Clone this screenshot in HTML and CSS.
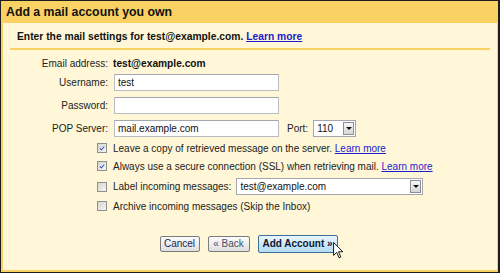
FILE: index.html
```html
<!DOCTYPE html>
<html>
<head>
<meta charset="utf-8">
<link rel="stylesheet" href="styles.css">
</head>
<body>
<div class="frame">
  <div class="header">Add a mail account you own</div>
  <div class="body">
    <div class="intro">Enter the mail settings for test@example.com. <a href="#">Learn more</a></div>
    <div class="form">
      <span class="label r-email">Email address:</span><b class="email r-email">test@example.com</b>
      <label class="label">Username:</label><input class="text" type="text" value="test">
      <label class="label">Password:</label><input class="text" type="password" value="">
      <label class="label">POP Server:</label>
      <div class="pop">
        <input class="text" type="text" value="mail.example.com">
        <span class="port">Port:</span>
        <div class="select port-sel"><span class="val">110</span><span class="arrow"></span></div>
      </div>
    </div>
    <div class="checks">
      <div class="check c1"><span class="box on"><svg viewBox="0 0 10 10"><path d="M2.3 4.6 L4.2 6.6 L7.8 2.6 L7.8 4.2 L4.2 8.2 L2.3 6.2 Z" fill="#2a3fb0"/></svg></span><span>Leave a copy of retrieved message on the server. <a href="#">Learn more</a></span></div>
      <div class="check c2"><span class="box on"><svg viewBox="0 0 10 10"><path d="M2.3 4.6 L4.2 6.6 L7.8 2.6 L7.8 4.2 L4.2 8.2 L2.3 6.2 Z" fill="#2a3fb0"/></svg></span><span>Always use a secure connection (SSL) when retrieving mail. <a href="#">Learn more</a></span></div>
      <div class="check c3"><span class="box"></span><span>Label incoming messages:</span><div class="select label-sel"><span class="val">test@example.com</span><span class="arrow"></span></div></div>
      <div class="check c4"><span class="box"></span><span>Archive incoming messages (Skip the Inbox)</span></div>
    </div>
    <div class="buttons">
      <button class="btn">Cancel</button>
      <button class="btn">« Back</button>
      <button class="btn primary">Add Account »</button>
    </div>
  </div>
  <svg class="cursor" viewBox="0 0 12 19" width="11" height="17"><path d="M0.5 0.5 L0.5 15 L4 11.6 L6.6 17.6 L8.6 16.8 L6 10.9 L10.8 10.9 Z" fill="#fff" stroke="#000" stroke-width="1" stroke-linejoin="miter"/></svg>
</div>
</body>
</html>
```

FILE: styles.css
```css
* { box-sizing: border-box; }
html, body { margin: 0; padding: 0; }
body {
  width: 500px;
  height: 273px;
  font-family: "Liberation Sans", Arial, sans-serif;
  font-size: 10px;
  color: #222;
  overflow: hidden;
}
.frame {
  position: relative;
  width: 500px;
  height: 273px;
  border: 1px solid #1d1d1d;
  border-right-width: 2px;
  border-bottom-width: 1px;
  background: #fad163;
  display: flex;
  flex-direction: column;
}
.header {
  height: 22px;
  line-height: 22px;
  padding-left: 5px;
  font-size: 12.3px;
  font-weight: bold;
  color: #111;
  flex: none;
}
.body {
  flex: 1;
  margin: 0 1px 2px 2px;
  background: #fff7d7;
}
.intro {
  margin: 0 7px 0 7px;
  padding: 7px 0 5px 7px;
  line-height: 13px;
  font-size: 10.3px;
  font-weight: bold;
  color: #111;
  border-bottom: 2px solid #fad163;
}
a { color: #1c1ccc; text-decoration: underline; }
.form {
  display: grid;
  grid-template-columns: 105px auto;
  grid-template-rows: 18px 17px 23px 23px;
  column-gap: 5px;
  align-items: end;
  margin-top: 6px;
}
.label {
  text-align: right;
  color: #222;
  line-height: 17px;
}
.r-email { line-height: 16px; align-self: start; }
.email { font-weight: bold; color: #111; font-size: 10.2px; }
.text {
  width: 165px;
  height: 17px;
  margin: 0 0 0 1px;
  padding: 0 3px;
  border: 1px solid #b9bcc3;
  border-top-color: #a4a7ae;
  border-radius: 1px;
  background: #fff;
  font-family: inherit;
  font-size: 10px;
  color: #111;
  outline: none;
}
.pop {
  display: flex;
  align-items: center;
}
.port { margin-left: 8px; margin-right: 5px; }
.select {
  height: 17px;
  display: flex;
  align-items: center;
  justify-content: space-between;
  border: 1px solid #a2a6ad;
  background: #fff;
  padding: 1px 1px 1px 3px;
  color: #111;
}
.port-sel { width: 43px; }
.label-sel { width: 187px; margin-left: 5px; }
.arrow {
  width: 11px;
  height: 13px;
  border: 1px solid #8c8f96;
  background: linear-gradient(#f7f7f7, #d6d6d6);
  position: relative;
}
.arrow::after {
  content: "";
  position: absolute;
  left: 2px;
  top: 4px;
  border-left: 3px solid transparent;
  border-right: 3px solid transparent;
  border-top: 3px solid #111;
}
.checks {
  padding-left: 94px;
  margin-top: 3px;
}
.check {
  display: flex;
  align-items: center;
  height: 16px;
  white-space: nowrap;
}
.c2 { margin-top: 2px; }
.c3 { margin-top: 4px; height: 17px; }
.c4 { margin-top: 3px; }
.box {
  width: 10px;
  height: 10px;
  border: 1px solid #8e8f8f;
  background: linear-gradient(135deg, #d5d5d2, #f4f4f2);
  margin-right: 6px;
  flex: none;
  display: flex;
}
.box svg { width: 8px; height: 8px; }
.buttons {
  display: flex;
  justify-content: center;
  align-items: center;
  gap: 8px;
  margin-top: 21px;
  padding-right: 3px;
}
.btn {
  height: 16px;
  padding: 0;
  white-space: nowrap;
  font-family: inherit;
  font-size: 10px;
  color: #1b2350;
  border: 1px solid #7b7b7b;
  border-radius: 2px;
  background: linear-gradient(#fcfcfc, #dedede);
  line-height: 14px;
}
.btn:nth-child(1) { width: 40px; }
.btn:nth-child(2) { width: 42px; color: #44506a; }
.primary {
  width: 80px;
  height: 18px;
  font-weight: bold;
  color: #0e1730;
  border-color: #3b6e98;
  background: linear-gradient(#eaf6fd, #b4dcf5);
}
.cursor {
  position: absolute;
  left: 332px;
  top: 241px;
}
```
